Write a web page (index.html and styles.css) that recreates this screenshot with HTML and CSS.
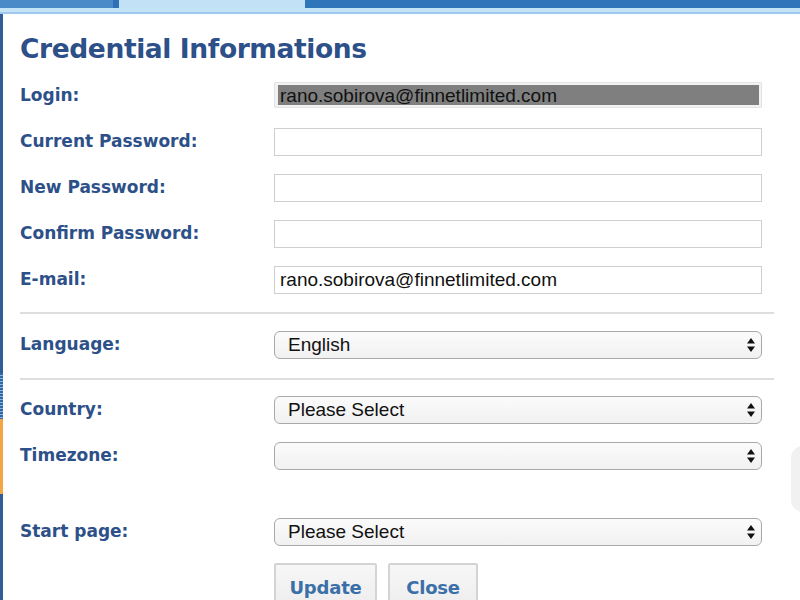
FILE: index.html
```html
<!DOCTYPE html>
<html>
<head>
<meta charset="utf-8">
<link rel="stylesheet" href="styles.css">
</head>
<body>
<div class="topbar">
  <div class="seg seg-a"></div>
  <div class="seg seg-b"></div>
  <div class="seg seg-c"></div>
</div>
<div class="subbar"></div>
<div class="page">
  <div class="edge">
    <div class="edge-blue"></div>
    <div class="edge-stripes"></div>
    <div class="edge-orange"></div>
    <div class="edge-blue2"></div>
  </div>
  <div class="content">
    <h1 class="title">Credential Informations</h1>
    <div class="form">
      <div class="row">
        <label class="label">Login:</label>
        <div class="field login-field"><span class="login-value">rano.sobirova@finnetlimited.com</span></div>
      </div>
      <div class="row">
        <label class="label">Current Password:</label>
        <div class="field input"></div>
      </div>
      <div class="row">
        <label class="label">New Password:</label>
        <div class="field input"></div>
      </div>
      <div class="row">
        <label class="label">Confirm Password:</label>
        <div class="field input"></div>
      </div>
      <div class="row">
        <label class="label">E-mail:</label>
        <div class="field input">rano.sobirova@finnetlimited.com</div>
      </div>
      <div class="divider"></div>
      <div class="row">
        <label class="label">Language:</label>
        <div class="field select"><span>English</span><svg class="arrows" width="8" height="14" viewBox="0 0 8 14"><path d="M4 0 L8 5.5 L0 5.5 Z M4 14 L8 8.5 L0 8.5 Z" fill="#111"/></svg></div>
      </div>
      <div class="divider divider-2"></div>
      <div class="row">
        <label class="label">Country:</label>
        <div class="field select"><span>Please Select</span><svg class="arrows" width="8" height="14" viewBox="0 0 8 14"><path d="M4 0 L8 5.5 L0 5.5 Z M4 14 L8 8.5 L0 8.5 Z" fill="#111"/></svg></div>
      </div>
      <div class="row row-tz">
        <label class="label">Timezone:</label>
        <div class="field select"><span></span><svg class="arrows" width="8" height="14" viewBox="0 0 8 14"><path d="M4 0 L8 5.5 L0 5.5 Z M4 14 L8 8.5 L0 8.5 Z" fill="#111"/></svg></div>
      </div>
      <div class="row">
        <label class="label">Start page:</label>
        <div class="field select"><span>Please Select</span><svg class="arrows" width="8" height="14" viewBox="0 0 8 14"><path d="M4 0 L8 5.5 L0 5.5 Z M4 14 L8 8.5 L0 8.5 Z" fill="#111"/></svg></div>
      </div>
      <div class="buttons">
        <button class="btn btn-update">Update</button>
        <button class="btn btn-close">Close</button>
      </div>
    </div>
  </div>
</div>
<div class="side-tab"></div>
</body>
</html>
```

FILE: styles.css
```css
html, body {
  margin: 0;
  padding: 0;
  background: #ffffff;
  width: 800px;
  height: 600px;
  overflow: hidden;
}
body {
  font-family: "DejaVu Sans", Verdana, sans-serif;
  position: relative;
}
.topbar {
  display: flex;
  height: 8px;
}
.seg-a {
  width: 113px;
  background: #4a8ac8;
  border-right: 6px solid #2f6fb5;
}
.seg-b {
  width: 186px;
  background: #c2e1f7;
}
.seg-c {
  flex: 1;
  background: #2e75b9;
}
.subbar {
  height: 4px;
  background: #c5e3f7;
  border-bottom: 2px solid #9fc8ee;
}
.page {
  display: flex;
  height: 586px;
}
.edge {
  width: 3px;
  display: flex;
  flex-direction: column;
}
.edge-blue {
  height: 359px;
  background: #2f5d99;
}
.edge-stripes {
  height: 46px;
  background: repeating-linear-gradient(#2f6aa8 0 2px, #8fb3d9 2px 3px);
}
.edge-orange {
  height: 75px;
  background: #f4a642;
}
.edge-blue2 {
  flex: 1;
  background: #2f5d99;
}
.content {
  flex: 1;
  padding-left: 17px;
}
.title {
  margin: 0;
  padding-top: 18px;
  height: 50px;
  font-size: 26.5px;
  font-weight: bold;
  color: #2d5089;
  letter-spacing: -0.4px;
  line-height: 34px;
}
.form {
  width: 754px;
}
.row {
  display: flex;
  align-items: flex-start;
  height: 46px;
}
.label {
  width: 254px;
  padding-top: 2px;
  font-size: 17px;
  font-weight: bold;
  color: #2d5089;
  line-height: 22px;
}
.field {
  box-sizing: border-box;
  width: 488px;
  height: 28px;
  font-family: "Liberation Sans", Arial, sans-serif;
  font-size: 19px;
  color: #111;
}
.login-field {
  height: 26px;
  border: 1px solid #e3e3e3;
  border-radius: 1px;
  padding: 2px 2px 2px 3px;
  background: #f2f2f2;
  display: flex;
}
.login-value {
  flex: 1;
  background: #7f7f7f;
  color: #111;
  line-height: 22px;
  padding-left: 2px;
}
.input {
  border: 1px solid #cfcfcf;
  background: #fff;
  padding-left: 5px;
  line-height: 26px;
}
.divider {
  height: 2px;
  background: #dedede;
  margin: 0 0 17px 0;
}
.divider-2 {
  margin-top: 1px;
  margin-bottom: 16px;
}
.row-tz {
  height: 76px;
}
.select {
  display: flex;
  align-items: center;
  justify-content: space-between;
  border: 1px solid #a9a9a9;
  border-radius: 6px;
  background: linear-gradient(#fbfbfb, #f1f1f1);
  padding: 0 6px 0 13px;
  line-height: 26px;
}
.arrows {
  display: block;
}
.buttons {
  display: flex;
  gap: 11px;
  margin-left: 254px;
  margin-top: -1px;
}
.btn {
  box-sizing: border-box;
  height: 50px;
  padding: 0;
  border: 2px solid #d4d4d4;
  border-radius: 2px;
  background: linear-gradient(#f7f7f7, #ececec);
  font-family: "DejaVu Sans", Verdana, sans-serif;
  font-size: 18px;
  font-weight: bold;
  letter-spacing: -0.2px;
  color: #3b6fa7;
  line-height: 46px;
}
.btn-update {
  width: 103px;
}
.btn-close {
  width: 90px;
}
.side-tab {
  position: absolute;
  left: 791px;
  top: 446px;
  width: 40px;
  height: 66px;
  border-radius: 12px;
  background: #f1f1f1;
}
```
